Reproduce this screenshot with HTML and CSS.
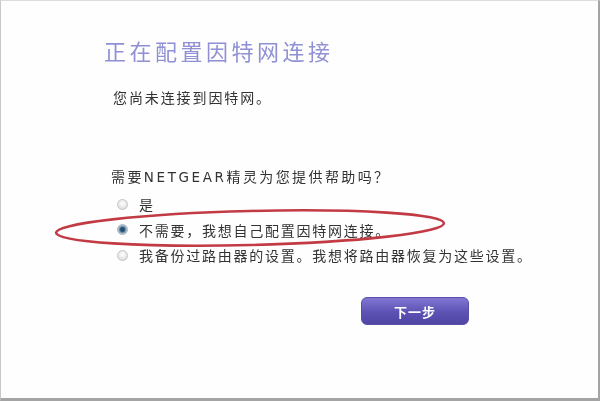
FILE: index.html
```html
<!DOCTYPE html>
<html lang="zh-CN">
<head>
<meta charset="utf-8">
<title>正在配置因特网连接</title>
<link rel="stylesheet" href="styles.css">
</head>
<body>
<div class="frame">
  <div class="wizard">
    <h1 class="title">正在配置因特网连接</h1>
    <p class="status">您尚未连接到因特网。</p>
    <p class="question">需要<span class="brand">NETGEAR</span>精灵为您提供帮助吗？</p>
    <ul class="options">
      <li class="option"><span class="radio"></span><span>是</span></li>
      <li class="option"><span class="radio checked"></span><span>不需要，我想自己配置因特网连接。</span></li>
      <li class="option"><span class="radio"></span><span>我备份过路由器的设置。我想将路由器恢复为这些设置。</span></li>
    </ul>
    <div class="actions">
      <button class="next">下一步</button>
    </div>
  </div>
  <svg class="mark" width="600" height="401" viewBox="0 0 600 401">
    <ellipse cx="250" cy="228" rx="194" ry="17" transform="rotate(-1.4 250 228)" fill="none" stroke="#c23a44" stroke-width="2.6"/>
  </svg>
</div>
</body>
</html>
```
FILE: styles.css
```css
* { box-sizing: border-box; }

html, body {
  margin: 0;
  padding: 0;
  background: #ffffff;
}

.frame {
  position: relative;
  width: 600px;
  height: 401px;
  background: #fefefe;
  border-left: 1px solid #c8c8c8;
  border-top: 1px solid #dcdcdc;
  border-right: 2px solid #a4a4a4;
  border-bottom: 3px solid #a4a4a4;
  overflow: hidden;
  font-family: "Noto Sans CJK SC", "Liberation Sans", sans-serif;
  color: #333333;
}

.wizard {
  display: flex;
  flex-direction: column;
  padding: 35px 0 0 103px;
  filter: blur(0.35px);
}

.title {
  margin: 0;
  font-size: 22px;
  font-weight: 400;
  line-height: 28px;
  letter-spacing: 3.5px;
  color: #9090d4;
}

.status {
  margin: 23px 0 0 9px;
  font-size: 14px;
  line-height: 20px;
  letter-spacing: 1.9px;
}

.question {
  margin: 59px 0 0 7px;
  font-size: 14px;
  line-height: 20px;
  letter-spacing: 2.4px;
}

.brand {
  font-family: "DejaVu Sans", "Noto Sans CJK SC", sans-serif;
  font-size: 13.5px;
  letter-spacing: 2.6px;
}

.options {
  list-style: none;
  margin: 7px 0 0 13px;
  padding: 0;
  display: flex;
  flex-direction: column;
  gap: 5.5px;
}

.option {
  display: flex;
  align-items: center;
  gap: 11px;
  font-size: 14px;
  line-height: 20px;
  letter-spacing: 1.75px;
}

.radio {
  width: 11px;
  height: 11px;
  border-radius: 50%;
  border: 1px solid #c4c4c4;
  background: radial-gradient(circle at 50% 40%, #ffffff 0%, #e6e6e6 60%, #cfcfcf 100%);
  flex: none;
}

.radio.checked {
  border-color: #a9b4bf;
  background: radial-gradient(circle at 50% 50%, #1d3e5e 0%, #2f5f86 35%, #9fb3c6 60%, #e4e8ec 100%);
}

.actions {
  display: flex;
  margin: 32px 0 0 257px;
}

.next {
  width: 108px;
  height: 28px;
  border: 1px solid #5a4fa8;
  border-radius: 6px;
  background: linear-gradient(#8076d2, #5d52b4 55%, #4f45a4);
  color: #ffffff;
  font-family: "Noto Sans CJK SC", sans-serif;
  font-size: 13px;
  font-weight: 700;
  letter-spacing: 1px;
  padding: 0;
}

.mark {
  position: absolute;
  left: -1px;
  top: -1px;
  filter: blur(0.5px);
}
```
